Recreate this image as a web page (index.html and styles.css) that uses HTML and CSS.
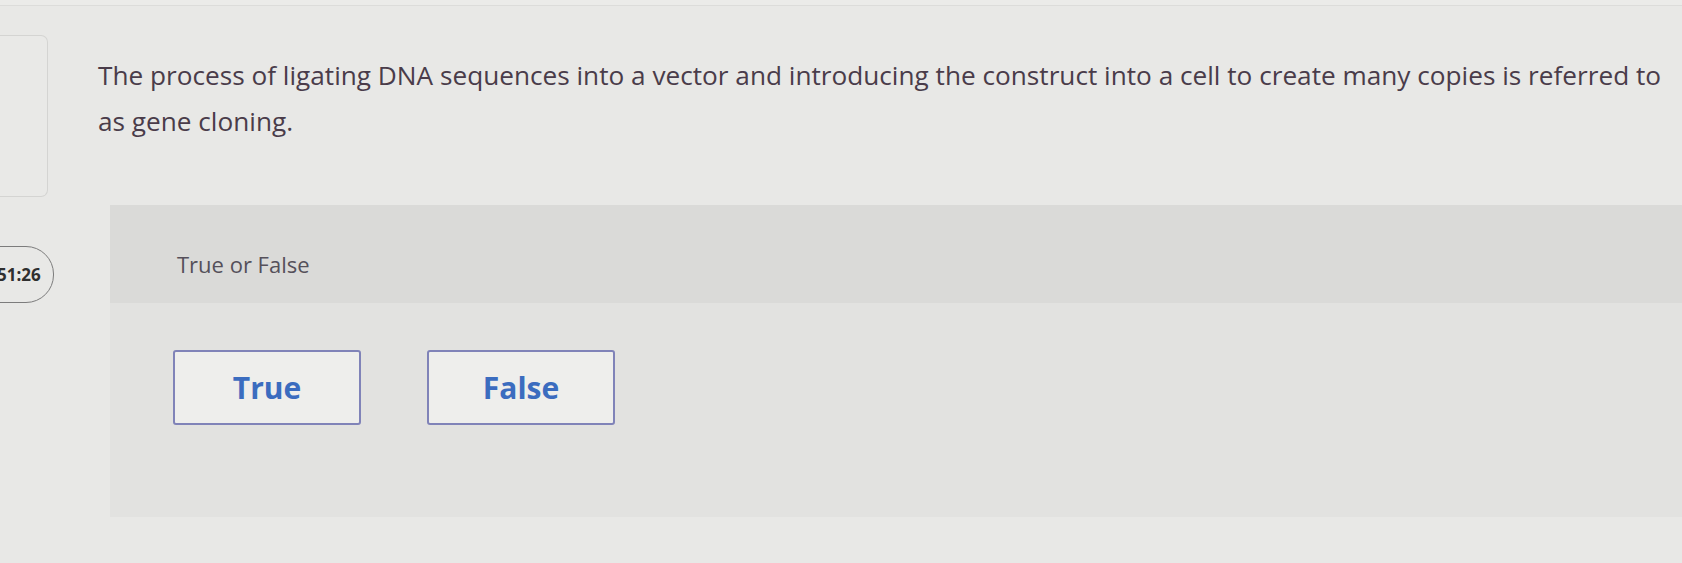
FILE: index.html
```html
<!DOCTYPE html>
<html lang="en">
<head>
<meta charset="utf-8">
<title>True or False</title>
<link rel="stylesheet" href="styles.css">
</head>
<body>
<div class="screen">
  <div class="top-strip"></div>
  <div class="question-row">
    <div class="side-card"></div>
    <p class="question">The process of ligating DNA sequences into a vector and introducing the construct into a cell to create many copies is referred to as gene cloning.</p>
  </div>
  <div class="answer-row">
    <div class="rail">
      <div class="timer">51:26</div>
    </div>
    <div class="panel">
      <div class="panel-head">True or False</div>
      <div class="panel-body">
        <button class="choice">True</button>
        <button class="choice">False</button>
      </div>
    </div>
  </div>
</div>
</body>
</html>
```

FILE: styles.css
```css
html, body {
  margin: 0;
  padding: 0;
}
body {
  background: #e8e8e6;
  font-family: "Open Sans", "Liberation Sans", sans-serif;
  width: 1682px;
  height: 563px;
  overflow: hidden;
}
.screen {
  display: flex;
  flex-direction: column;
}
.top-strip {
  height: 5px;
  border-bottom: 1px solid #dcdcda;
  background: #ebebe9;
}
.question-row {
  display: flex;
  align-items: flex-start;
  height: 199px;
}
.side-card {
  width: 47px;
  height: 160px;
  margin-top: 29px;
  border: 1px solid #d4d4d2;
  border-left: none;
  border-radius: 0 7px 7px 0;
  background: #e9e9e7;
}
.question {
  margin: 0;
  margin-left: 50px;
  padding-top: 46px;
  width: 1580px;
  font-size: 26.2px;
  line-height: 46px;
  color: #4a3c4a;
}
.answer-row {
  display: flex;
  align-items: flex-start;
}
.rail {
  width: 110px;
  flex: none;
}
.timer {
  width: 66px;
  height: 57px;
  margin-left: -12px;
  margin-top: 41px;
  box-sizing: border-box;
  border: 1.5px solid #7c7c7c;
  border-radius: 0 28px 28px 0;
  display: flex;
  align-items: center;
  padding-left: 8px;
  font-family: "Open Sans", "Liberation Sans", sans-serif;
  font-weight: 700;
  font-size: 17px;
  color: #2f2f2f;
}
.panel {
  flex: 1;
  height: 312px;
  background: #e2e2e0;
  display: flex;
  flex-direction: column;
}
.panel-head {
  height: 98px;
  box-sizing: border-box;
  background: #dadad8;
  padding-left: 67px;
  padding-top: 44px;
  font-size: 22px;
  color: #55505a;
}
.panel-body {
  display: flex;
  gap: 66px;
  padding-left: 63px;
  padding-top: 47px;
}
.choice {
  width: 188px;
  height: 75px;
  box-sizing: border-box;
  background: #eeeeec;
  border: 2px solid #8083b8;
  border-radius: 3px;
  font-family: "Open Sans", "Liberation Sans", sans-serif;
  font-weight: 700;
  font-size: 30px;
  color: #3b6cbf;
  padding: 0;
}
```
